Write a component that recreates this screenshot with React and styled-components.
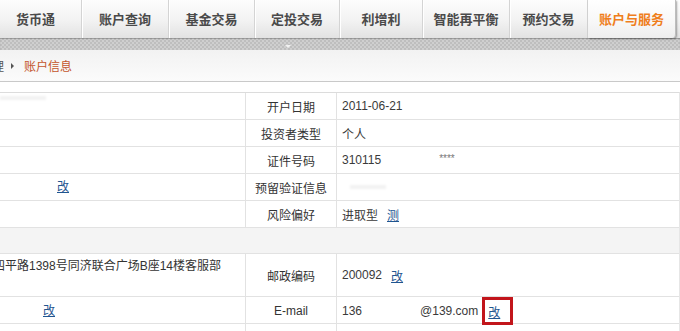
import React from 'react';
import styled, { createGlobalStyle, css } from 'styled-components';

const GlobalStyle = createGlobalStyle`
  html, body {
    margin: 0;
    padding: 0;
    background: #fff;
  }
  body {
    width: 680px;
    height: 331px;
    overflow: hidden;
    font-family: "Liberation Sans", "Noto Sans CJK SC", sans-serif;
    font-size: 12px;
    color: #333;
  }
`;

const Page = styled.div`
  width: 680px;
  overflow: hidden;
`;

// top tabs
const Nav = styled.nav`
  display: flex;
  height: 38px;
  margin-left: -10px;
  background: linear-gradient(#fdfdfd, #f2f2f2 55%, #e2e2e2);
`;

const Tab = styled.div`
  flex: none;
  width: ${(p) => p.$w}px;
  box-sizing: border-box;
  display: flex;
  align-items: center;
  justify-content: center;
  padding-bottom: 1px;
  font-family: "Noto Sans CJK SC", sans-serif;
  font-weight: 700;
  font-size: 13px;
  color: #4a4a4a;
  border-right: 1px solid #d4d4d4;
  box-shadow: inset 1px 0 0 #ffffff;

  ${(p) =>
    p.$active &&
    css`
      color: #ef7e1c;
      background: linear-gradient(#ffffff, #f7f7f7 60%, #eeeeee);
      border-right: 1px solid #bdbdbd;
      border-bottom-right-radius: 4px;
      box-shadow: 1px 1px 2px rgba(0, 0, 0, 0.35);
      z-index: 1;
    `}
`;

const Strip = styled.div`
  display: flex;
  height: 12px;
  background-color: #c6c6c6;
  background-image: repeating-conic-gradient(#bebebe 0 25%, #cfcfcf 0 50%);
  background-size: 4px 4px;
  box-shadow: inset 0 1px 1px rgba(0, 0, 0, 0.25);
`;

const Caret = styled.span`
  margin: 7px 0 0 285px;
  width: 0;
  height: 0;
  border-left: 3px solid transparent;
  border-right: 3px solid transparent;
  border-top: 3px solid #f2f2f2;
`;

// breadcrumb
const Crumbs = styled.div`
  display: flex;
  align-items: center;
  height: 31px;
  background: linear-gradient(#f2f2f2, #fbfbfb);
  border-bottom: 1px solid #c9c9c9;
  font-family: "Noto Sans CJK SC", sans-serif;
  font-size: 12px;
  color: #555;
`;

const CrumbParent = styled.span`
  margin-left: -8px;
`;

const CrumbArrow = styled.span`
  margin: 0 10px 0 7px;
  width: 0;
  height: 0;
  border-top: 3px solid transparent;
  border-bottom: 3px solid transparent;
  border-left: 3px solid #555;
`;

const CrumbCurrent = styled.span`
  color: #c4552c;
`;

// table
const Table = styled.div`
  margin-top: 10px;
  width: 679px;
  border-top: 1px solid #dcdcdc;
  border-right: 1px solid #e6e6e6;
`;

const Row = styled.div`
  display: grid;
  grid-template-columns: 246px 91px 1fr;
  height: ${(p) => p.$h || 27}px;
  box-sizing: border-box;
  border-bottom: 1px solid #e2e2e2;
`;

const Band = styled.div`
  height: 26px;
  box-sizing: border-box;
  background: #f4f4f4;
  border-bottom: 1px solid #e2e2e2;
`;

const LeftCell = styled.div`
  display: flex;
  align-items: ${(p) => (p.$top ? 'flex-start' : 'center')};
  box-sizing: border-box;
  padding-left: ${(p) => p.$pad || 0}px;
  padding-top: ${(p) => (p.$top ? 3 : 0)}px;
  border-right: 1px solid #e2e2e2;
  line-height: 18px;
  white-space: nowrap;
  overflow: hidden;
`;

const LabelCell = styled.div`
  display: flex;
  align-items: center;
  justify-content: center;
  box-sizing: border-box;
  border-right: 1px solid #e2e2e2;
  color: #333;
`;

const ValueCell = styled.div`
  display: flex;
  align-items: center;
  padding-left: 5px;
  color: #3a3a3a;
  white-space: nowrap;
`;

const Address = styled.span`
  margin-left: -7px;
  color: #333;
`;

const Link = styled.a`
  margin-left: ${(p) => p.$gap || 0}px;
  color: #1f5590;
  text-decoration: underline;
  cursor: pointer;
`;

const Masked = styled.span`
  margin-left: ${(p) => p.$gap}px;
  font-size: 10px;
  color: #777;
  align-self: flex-start;
  margin-top: 6px;
`;

const Gap = styled.span`
  display: inline-block;
  width: ${(p) => p.$w}px;
`;

const Smudge = styled.span`
  display: inline-block;
  width: ${(p) => p.$w}px;
  height: 4px;
  margin-left: ${(p) => p.$x || 0}px;
  align-self: ${(p) => (p.$top ? 'flex-start' : 'center')};
  margin-top: ${(p) => (p.$top ? 3 : 0)}px;
  background: rgba(0, 0, 0, 0.05);
  filter: blur(1px);
`;

const Highlight = styled.span`
  display: inline-flex;
  align-items: center;
  box-sizing: border-box;
  height: 28px;
  margin-left: 4px;
  padding: 0 10px 0 3px;
  border: 3px solid #c2151b;
`;

const tabs = [
  { label: '货币通', w: 92 },
  { label: '账户查询', w: 87 },
  { label: '基金交易', w: 86 },
  { label: '定投交易', w: 85 },
  { label: '利增利', w: 83 },
  { label: '智能再平衡', w: 87 },
  { label: '预约交易', w: 78 },
  { label: '账户与服务', w: 88, active: true },
];

const App = () => {
  return (
    <Page>
      <GlobalStyle />

      {/* tabs */}
      <Nav>
        {tabs.map((t) => (
          <Tab key={t.label} $w={t.w} $active={t.active}>
            {t.label}
          </Tab>
        ))}
      </Nav>
      <Strip>
        <Caret />
      </Strip>

      {/* breadcrumb */}
      <Crumbs>
        <CrumbParent>理</CrumbParent>
        <CrumbArrow />
        <CrumbCurrent>账户信息</CrumbCurrent>
      </Crumbs>

      {/* account info */}
      <Table>
        <Row>
          <LeftCell>
            <Smudge $w={46} $top />
          </LeftCell>
          <LabelCell>开户日期</LabelCell>
          <ValueCell>2011-06-21</ValueCell>
        </Row>
        <Row>
          <LeftCell />
          <LabelCell>投资者类型</LabelCell>
          <ValueCell>个人</ValueCell>
        </Row>
        <Row>
          <LeftCell />
          <LabelCell>证件号码</LabelCell>
          <ValueCell>
            310115
            <Masked $gap={58}>****</Masked>
          </ValueCell>
        </Row>
        <Row>
          <LeftCell $pad={57}>
            <Link>改</Link>
          </LeftCell>
          <LabelCell>预留验证信息</LabelCell>
          <ValueCell>
            <Smudge $w={36} $x={8} />
          </ValueCell>
        </Row>
        <Row>
          <LeftCell />
          <LabelCell>风险偏好</LabelCell>
          <ValueCell>
            进取型
            <Link $gap={9}>测</Link>
          </ValueCell>
        </Row>
        <Band />
        <Row $h={43}>
          <LeftCell $top>
            <Address>四平路1398号同济联合广场B座14楼客服部</Address>
          </LeftCell>
          <LabelCell>邮政编码</LabelCell>
          <ValueCell>
            200092
            <Link $gap={9}>改</Link>
          </ValueCell>
        </Row>
        <Row>
          <LeftCell $pad={43}>
            <Link>改</Link>
          </LeftCell>
          <LabelCell>E-mail</LabelCell>
          <ValueCell>
            136
            <Gap $w={58} />
            @139.com
            <Highlight>
              <Link>改</Link>
            </Highlight>
          </ValueCell>
        </Row>
        <Row>
          <LeftCell />
          <LabelCell />
          <ValueCell />
        </Row>
      </Table>
    </Page>
  );
};

export default App;
